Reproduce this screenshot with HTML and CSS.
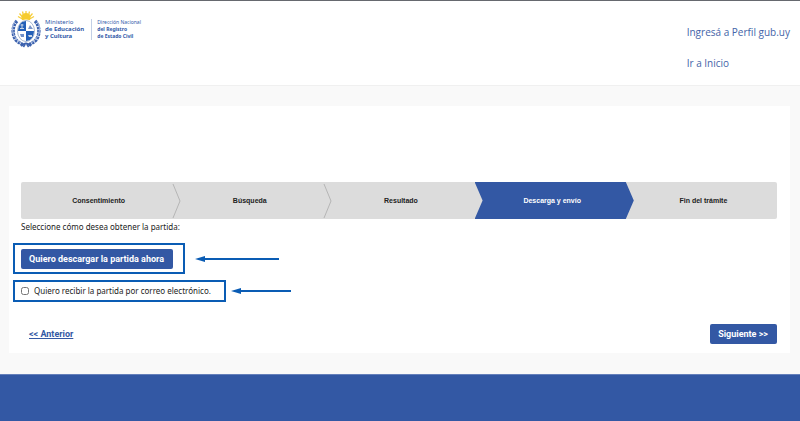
FILE: index.html
```
<!DOCTYPE html>
<html lang="es">
<head>
<meta charset="utf-8">
<meta name="viewport" content="width=device-width, initial-scale=1">
<title>Partidas - Descarga y envío</title>
<link rel="stylesheet" href="styles.css">
</head>
<body>
<header class="header">
  <div class="brand">
    <svg class="crest" viewBox="0 0 30 38" aria-hidden="true">
      <g stroke="#f7cf3c" stroke-width="1.3">
        <path d="M15 1v9M11.500 1.500l2 8M18.500 1.500l-2 8M8.500 3.500l5 6M21.500 3.500l-5 6M7 6.500l7 4M23 6.500l-7 4"/>
      </g>
      <circle cx="15" cy="7.500" r="4.500" fill="#f6cb2e"/>
      <g fill="none" stroke="#3c62ae" stroke-width="3.400" stroke-dasharray="2.600 .7">
        <path d="M6 11C1 16 1 25 5 30c3 3 6 4 9 6"/>
        <path d="M24 11c5 5 5 14 1 19-3 3-6 4-9 6"/>
      </g>
      <g fill="none" stroke="#9db2dc" stroke-width="1">
        <path d="M4 11C-1 18 2 29 10 33M26 11c5 7 2 18-6 22"/>
      </g>
      <path d="M10 36l5-3 5 3" fill="none" stroke="#3c62ae" stroke-width="2"/>
      <ellipse cx="15" cy="21" rx="9.500" ry="11.500" fill="#fff"/>
      <path d="M15 11v10H7c0-6 3-10 8-10z" fill="#2460b8"/>
      <path d="M15 21h8c0 6-3 10-8 10z" fill="#2460b8"/>
      <path d="M9 18.500h4M11 14v4M9.500 15h3" stroke="#c9d6e8" stroke-width="1"/>
      <path d="M17 19l2-4 3 4z" fill="#7894c9"/>
      <path d="M9 24h4v3h-3z" fill="#6f8fc9"/>
      <path d="M17 25h4v2h-3z" fill="#c9d6e8"/>
      <ellipse cx="15" cy="21" rx="8.500" ry="10.500" fill="none" stroke="#8fa3c4" stroke-width=".8"/>
    </svg>
    <p class="ministry">Ministerio<br><b>de Educación<br>y Cultura</b></p>
    <p class="office">Dirección Nacional<br><b>del Registro<br>de Estado Civil</b></p>
  </div>
  <nav class="links">
    <a href="#perfil">Ingresá a Perfil gub.uy</a>
    <a href="#inicio">Ir a Inicio</a>
  </nav>
</header>
<main class="main">
  <form class="card">
    <ol class="steps">
      <li class="step">Consentimiento<svg class="chevron" viewBox="0 0 9 37" aria-hidden="true"><path d="M1 2l7 17-7 17"/></svg></li>
      <li class="step">Búsqueda<svg class="chevron" viewBox="0 0 9 37" aria-hidden="true"><path d="M1 2l7 17-7 17"/></svg></li>
      <li class="step">Resultado</li>
      <li class="step current" aria-current="step">Descarga y envío</li>
      <li class="step">Fin del trámite</li>
    </ol>
    <p class="prompt">Seleccione cómo desea obtener la partida:</p>
    <div class="option">
      <div class="frame"><button class="button" type="button">Quiero descargar la partida ahora</button></div>
      <svg class="arrow" width="84" height="8" viewBox="0 0 84 8" aria-hidden="true"><path d="M8 4h76" stroke="#0a5cb4" stroke-width="2"/><path d="M0 4l10-3v6z" fill="#0a5cb4"/></svg>
    </div>
    <div class="option mail">
      <label class="frame"><input class="check" type="checkbox">Quiero recibir la partida por correo electrónico.</label>
      <svg class="arrow near" width="60" height="8" viewBox="0 0 60 8" aria-hidden="true"><path d="M8 4h52" stroke="#0a5cb4" stroke-width="2"/><path d="M0 4l10-3v6z" fill="#0a5cb4"/></svg>
    </div>
    <div class="actions">
      <a class="back" href="#anterior">&lt;&lt; Anterior</a>
      <button class="button" type="button">Siguiente &gt;&gt;</button>
    </div>
  </form>
</main>
<footer class="footer"></footer>
</body>
</html>
```
FILE: styles.css
```
* {
  box-sizing: border-box;
}

body {
  display: flex;
  flex-direction: column;
  min-height: 100vh;
  margin: 0;
  background: #f9f9f9;
  color: #222;
  font: 8px/12px "Noto Sans", sans-serif;
}

p {
  margin: 0;
}

.header {
  display: flex;
  justify-content: space-between;
  padding: 9px 10px 14px;
  border-top: 1px solid #66696f;
  border-bottom: 1px solid #f0f0f0;
  background: #fff;
}

.brand {
  display: flex;
  align-items: flex-start;
  color: #2f58a8;
}

.crest {
  width: 30px;
  height: 38px;
  margin-left: 1px;
}

.ministry,
.office {
  margin-top: 9px;
  font: 6px/7px "Noto Sans", sans-serif;
}

.ministry {
  margin-left: 4px;
  padding-right: 7px;
  border-right: 1px solid #c3cfe6;
}

.office {
  padding-left: 5px;
  font-size: 5px;
}

.links {
  display: flex;
  flex-direction: column;
  gap: 15px;
  padding-top: 14px;
  font: 10px/16px "Open Sans", sans-serif;
}

.links a {
  color: #4464a8;
  text-decoration: none;
}

.main {
  padding: 20px 10px 21px 9px;
}

.card {
  padding: 76px 13px 9px 4px;
  background: #fff;
}

.steps {
  display: grid;
  grid-template-columns: repeat(5, 1fr);
  margin: 0 0 0 8px;
  padding: 0;
  overflow: hidden;
  border-radius: 2px;
  background: #dcdcdc;
  list-style: none;
  font: bold 7px/37px "Liberation Sans", sans-serif;
  text-align: center;
}

.step {
  position: relative;
  padding-left: 4px;
}

.chevron {
  position: absolute;
  top: 0;
  right: -9px;
  width: 9px;
  height: 37px;
  fill: none;
  stroke: #b5b5b5;
}

.current {
  margin-right: -8px;
  padding-right: 8px;
  background: #3358a4;
  clip-path: polygon(0 0, calc(100% - 8px) 0, 100% 50%, calc(100% - 8px) 100%, 0 100%, 8px 50%);
  color: #fff;
}

.prompt {
  margin: 2px 0 10px 8px;
}

.option {
  display: flex;
  align-items: center;
}

.frame {
  display: flex;
  align-items: center;
  padding: 4px 10px 3px 6px;
  border: 2px solid #0a5cb4;
}

.button {
  padding: 4px 9px 4px 8px;
  border: 0;
  border-radius: 2px;
  background: #3358a4;
  color: #fff;
  font: bold 9px/12px Roboto, sans-serif;
}

.arrow {
  margin-left: 10px;
}

.near {
  margin-left: 5px;
}

.mail {
  margin-top: 6px;
}

.mail .frame {
  padding: 3px 13px 3px 6px;
}

.check {
  width: 8px;
  height: 8px;
  margin: 0 5px 0 0;
}

.actions {
  display: flex;
  align-items: center;
  justify-content: space-between;
  margin: 22px 0 0 16px;
}

.back {
  color: #3358a4;
  font: bold 9px/12px Roboto, sans-serif;
}

.footer {
  flex: 1;
  border-top: 1px solid #6580bb;
  background: #3358a4;
}
```
